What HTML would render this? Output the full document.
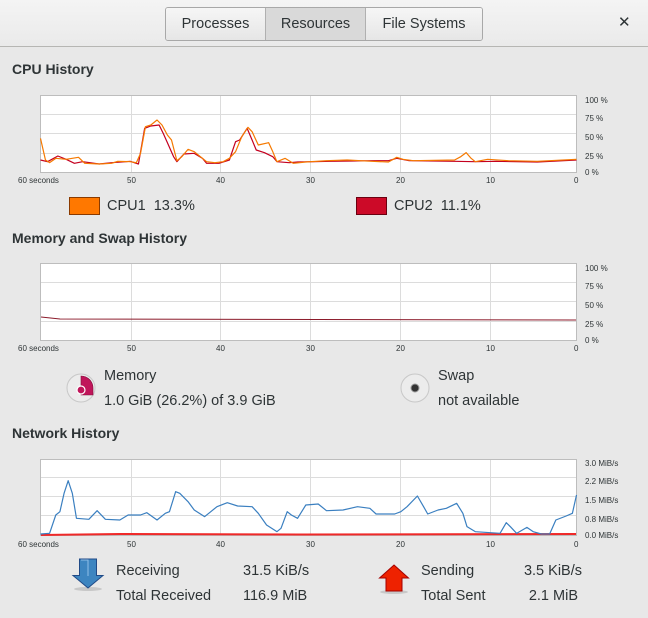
<!DOCTYPE html>
<html><head><meta charset="utf-8"><style>
body{margin:0;width:648px;height:618px;background:#e8e8e8;font-family:"Liberation Sans","DejaVu Sans",sans-serif;color:#2e3436;position:relative;overflow:hidden}
.hdr{position:absolute;left:0;top:0;width:648px;height:46px;background:linear-gradient(#f4f4f4,#eaeaea);border-bottom:1px solid #b6b6b3}
.tabs{position:absolute;left:165px;top:7px;height:32px;display:flex;border:1px solid #a8a8a8;border-radius:3px;overflow:hidden}
.tabs div{height:32px;line-height:32px;font-size:14.5px;text-align:center;background:linear-gradient(#f6f6f6,#e6e6e6);border-right:1px solid #b0b0b0}
.tabs div:last-child{border-right:none}
.tabs .act{background:#d9d9d9}
.x{position:absolute;left:618px;top:13px;font-size:15px;font-weight:bold}
.t{position:absolute;white-space:nowrap}
.h{font-size:14px;font-weight:bold}
.s{font-size:8px}
.m{font-size:14.5px}
</style></head><body>
<div class="hdr">
<div class="tabs"><div style="width:99px">Processes</div><div class="act" style="width:99px">Resources</div><div style="width:116px">File Systems</div></div>
<div class="x">✕</div>
</div>

<div class="t h" style="left:12px;top:61px">CPU History</div>
<div class="t h" style="left:12px;top:230px">Memory and Swap History</div>
<div class="t h" style="left:12px;top:425px">Network History</div>

<svg width="648" height="618" style="position:absolute;left:0;top:0">
<g fill="#fff" stroke="#bdbdbd" stroke-width="1">
<rect x="40.5" y="95.5" width="536" height="77"/>
<rect x="40.5" y="263.5" width="536" height="77"/>
<rect x="40.5" y="459.5" width="536" height="76"/>
</g>
<g stroke="#dcdcdc" stroke-width="1">
<path d="M131.5 96V172M220.5 96V172M310.5 96V172M400.5 96V172M490.5 96V172M41 114.5H576M41 133.5H576M41 153.5H576"/>
<path d="M131.5 264V340M220.5 264V340M310.5 264V340M400.5 264V340M490.5 264V340M41 282.5H576M41 301.5H576M41 321.5H576"/>
<path d="M131.5 460V535M220.5 460V535M310.5 460V535M400.5 460V535M490.5 460V535M41 477.5H576M41 496.5H576M41 515.5H576"/>
</g>
<path d="M41 317 L60 319 L576 320" stroke="#8b1a2a" fill="none" stroke-width="1"/>
<path d="M41 535 L120 534 L300 534.5 L576 534" stroke="#ef2929" fill="none" stroke-width="2"/>
</svg>

<svg width="648" height="220" viewBox="0 0 1568 660" preserveAspectRatio="none" style="position:absolute;left:0;top:0">
<polyline fill="none" stroke="#c4001f" stroke-width="1.2" vector-effect="non-scaling-stroke" stroke-linejoin="round" points="98,480 115,485 140,468 160,478 180,490 200,485 240,492 270,488 315,484 335,492 350,385 365,378 385,375 395,400 405,428 420,470 428,485 445,462 470,460 490,475 500,490 530,490 555,480 570,425 580,420 598,385 610,420 620,450 640,458 660,470 670,485 700,488 720,486 800,484 850,483 900,482 940,482 960,475 990,482 1100,484 1150,485 1200,484 1300,486 1395,480"/>
<polyline fill="none" stroke="#f57900" stroke-width="1.2" vector-effect="non-scaling-stroke" stroke-linejoin="round" points="98,415 110,480 120,488 135,475 160,478 190,472 205,490 240,492 270,490 285,484 315,485 330,488 340,460 352,380 365,375 380,360 392,375 405,405 415,420 428,482 440,470 455,448 470,455 485,470 500,485 520,488 540,485 555,475 570,455 585,410 600,382 610,395 625,435 650,428 660,455 670,485 690,475 710,490 740,486 790,482 840,480 900,484 940,486 960,472 975,478 1000,482 1100,480 1115,470 1128,458 1140,475 1150,485 1180,478 1230,482 1300,484 1395,478"/>
</svg>
<svg width="648" height="258" viewBox="0 0 1568 774" preserveAspectRatio="none" style="position:absolute;left:0;top:360px">
<polyline fill="none" stroke="#3a7fc0" stroke-width="1.2" vector-effect="non-scaling-stroke" stroke-linejoin="round" points="98,522 120,520 135,465 145,455 155,400 165,362 175,400 185,475 215,478 235,452 255,478 290,480 310,465 340,465 355,458 380,480 400,460 410,455 425,395 435,400 455,425 470,450 495,470 510,455 525,440 550,428 575,438 610,440 625,460 645,495 670,515 680,505 695,455 705,465 720,475 740,435 770,432 790,452 830,450 865,440 895,445 910,462 955,462 970,455 985,440 1010,408 1025,440 1035,462 1060,450 1080,445 1105,430 1120,460 1130,500 1150,515 1210,520 1225,488 1235,500 1250,520 1275,502 1290,515 1310,522 1330,522 1345,480 1370,468 1385,460 1395,405"/>
</svg>

<div class="t s" style="left:585px;top:96px">100 %</div>
<div class="t s" style="left:585px;top:114px">75 %</div>
<div class="t s" style="left:585px;top:133px">50 %</div>
<div class="t s" style="left:585px;top:152px">25 %</div>
<div class="t s" style="left:585px;top:168px">0 %</div>
<div class="t s" style="left:585px;top:264px">100 %</div>
<div class="t s" style="left:585px;top:282px">75 %</div>
<div class="t s" style="left:585px;top:301px">50 %</div>
<div class="t s" style="left:585px;top:320px">25 %</div>
<div class="t s" style="left:585px;top:336px">0 %</div>
<div class="t s" style="left:585px;top:459px">3.0 MiB/s</div>
<div class="t s" style="left:585px;top:477px">2.2 MiB/s</div>
<div class="t s" style="left:585px;top:496px">1.5 MiB/s</div>
<div class="t s" style="left:585px;top:515px">0.8 MiB/s</div>
<div class="t s" style="left:585px;top:531px">0.0 MiB/s</div>

<div style="position:absolute;left:0;top:176px">
<div class="t s" style="left:18px">60 seconds</div><div class="t s" style="left:127px">50</div><div class="t s" style="left:216px">40</div><div class="t s" style="left:306px">30</div><div class="t s" style="left:396px">20</div><div class="t s" style="left:486px">10</div><div class="t s" style="left:574px">0</div></div>
<div style="position:absolute;left:0;top:344px">
<div class="t s" style="left:18px">60 seconds</div><div class="t s" style="left:127px">50</div><div class="t s" style="left:216px">40</div><div class="t s" style="left:306px">30</div><div class="t s" style="left:396px">20</div><div class="t s" style="left:486px">10</div><div class="t s" style="left:574px">0</div></div>
<div style="position:absolute;left:0;top:540px">
<div class="t s" style="left:18px">60 seconds</div><div class="t s" style="left:127px">50</div><div class="t s" style="left:216px">40</div><div class="t s" style="left:306px">30</div><div class="t s" style="left:396px">20</div><div class="t s" style="left:486px">10</div><div class="t s" style="left:574px">0</div></div>

<div style="position:absolute;left:69px;top:197px;width:29px;height:16px;background:#ff7800;border:1px solid #8a3a00"></div>
<div class="t m" style="left:107px;top:198px">CPU1&nbsp; 13.3%</div>
<div style="position:absolute;left:356px;top:197px;width:29px;height:16px;background:#cc0a28;border:1px solid #6a0010"></div>
<div class="t m" style="left:394px;top:198px">CPU2&nbsp; 11.1%</div>

<svg width="648" height="618" style="position:absolute;left:0;top:0">
<circle cx="81" cy="388" r="14" fill="#ececec" stroke="#c8c8c8"/>
<path d="M81 388 L81 376 A12 12 0 0 1 93 388 L93 395 L81 395 Z" fill="#c0155a" stroke="#80103c" stroke-width=".6"/>
<circle cx="81" cy="390" r="4" fill="#c0155a" stroke="#ffffff" stroke-width="1.2"/>
<circle cx="415" cy="388" r="14" fill="#ececec" stroke="#c8c8c8"/>
<circle cx="415" cy="388" r="4" fill="#333" stroke="#999" stroke-width="1"/>
<ellipse cx="88" cy="589" rx="14" ry="2" fill="#c8c8c8"/>
<path d="M79.5 559 H96.5 V575.5 H103 L88 588 L73 575.5 H79.5 Z" fill="#3d85c0" stroke="#204a87" stroke-width="1"/>
<path d="M81 560 H88 V576" fill="none" stroke="#8fc0e8" stroke-width="1"/>
<ellipse cx="394" cy="592" rx="14" ry="2" fill="#c8c8c8"/>
<path d="M394 565 L408.5 578 H402 V591 H386 V578 H379.5 Z" fill="#ee2200" stroke="#a40000" stroke-width="1"/>
</svg>
<div class="t m" style="left:104px;top:368px">Memory</div>
<div class="t m" style="left:104px;top:393px">1.0 GiB (26.2%) of 3.9 GiB</div>
<div class="t m" style="left:438px;top:368px">Swap</div>
<div class="t m" style="left:438px;top:393px">not available</div>

<div class="t m" style="left:116px;top:563px">Receiving</div>
<div class="t m" style="left:116px;top:588px">Total Received</div>
<div class="t m" style="left:243px;top:563px">31.5 KiB/s</div>
<div class="t m" style="left:243px;top:588px">116.9 MiB</div>
<div class="t m" style="left:421px;top:563px">Sending</div>
<div class="t m" style="left:421px;top:588px">Total Sent</div>
<div class="t m" style="right:66px;top:563px">3.5 KiB/s</div>
<div class="t m" style="right:70px;top:588px">2.1 MiB</div>
</body></html>
